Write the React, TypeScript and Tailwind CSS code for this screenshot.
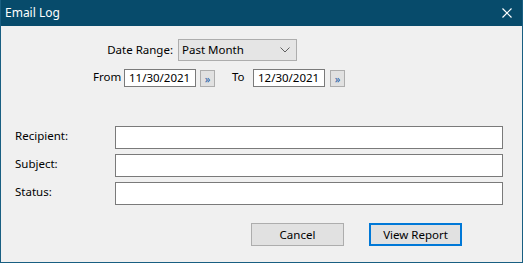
const font = { fontFamily: '"Segoe UI", "Noto Sans", "Open Sans", sans-serif' };

function Chevron() {
  return (
    <svg width="10" height="6" viewBox="0 0 10 6" fill="none" stroke="#606060" strokeWidth={1}>
      <path d="M0.5 0.5 L5 5 L9.5 0.5" />
    </svg>
  );
}

function PickButton() {
  return (
    <button className="flex h-[17px] w-[15px] shrink-0 items-center justify-center border border-[#adadad] bg-[#e1e1e1] text-[11px] leading-none text-[#1c5fa8]">
      »
    </button>
  );
}

function DateInput({ value }: { value: string }) {
  return (
    <div className="flex h-[18px] w-[72px] shrink-0 items-center whitespace-nowrap border border-[#7a7a7a] bg-white pl-[4px] text-[11.5px] text-black">
      {value}
    </div>
  );
}

const fields = ["Recipient:", "Subject:", "Status:"];

export default function App() {
  return (
    <div
      className="flex h-[263px] w-[523px] flex-col border border-t-0 border-[#195f82] bg-[#f0f0f0] text-[11.5px] text-black"
      style={font}
    >
      {/* Title bar */}
      <div className="flex h-[26px] shrink-0 items-center justify-between bg-[#074b6b] pl-[4px] pr-[10px] text-white">
        <span className="text-[12px]">Email Log</span>
        <svg width="10" height="10" viewBox="0 0 10 10" stroke="white" strokeWidth={1.2}>
          <path d="M0.5 0.5 L9.5 9.5 M9.5 0.5 L0.5 9.5" />
        </svg>
      </div>

      {/* Date range */}
      <div className="mt-[13px] flex h-[22px] items-center">
        <span className="ml-[91px] w-[81px] shrink-0 whitespace-nowrap text-right">Date Range:</span>
        <div className="ml-[5px] flex h-[22px] w-[119px] shrink-0 items-center justify-between border border-[#adadad] bg-[#e5e5e5] pl-[3px] pr-[6px]">
          <span className="whitespace-nowrap">Past Month</span>
          <Chevron />
        </div>
      </div>

      <div className="mt-[8px] flex h-[18px] items-center">
        <span className="ml-[92px] w-[31px] shrink-0 -translate-y-[1px] whitespace-nowrap">From</span>
        <DateInput value="11/30/2021" />
        <div className="ml-[4px]">
          <PickButton />
        </div>
        <span className="ml-[17px] w-[21px] shrink-0 -translate-y-[1px] whitespace-nowrap">To</span>
        <DateInput value="12/30/2021" />
        <div className="ml-[5px]">
          <PickButton />
        </div>
      </div>

      {/* Filters */}
      <div className="mt-[39px] flex flex-col gap-[5px]">
        {fields.map((f) => (
          <div key={f} className="flex h-[23px] items-center">
            <span className="ml-[14px] w-[100px] shrink-0 -translate-y-[2px] whitespace-nowrap">{f}</span>
            <div className="h-[23px] w-[388px] shrink-0 border border-[#7a7a7a] bg-white" />
          </div>
        ))}
      </div>

      {/* Buttons */}
      <div className="mt-[18px] flex">
        <button className="ml-[250px] h-[23px] w-[93px] border border-[#adadad] bg-[#e1e1e1] text-[11.5px]">
          Cancel
        </button>
        <button className="ml-[25px] h-[23px] w-[93px] border-2 border-[#0078d7] bg-[#e1e1e1] text-[11.5px]">
          View Report
        </button>
      </div>
    </div>
  );
}
